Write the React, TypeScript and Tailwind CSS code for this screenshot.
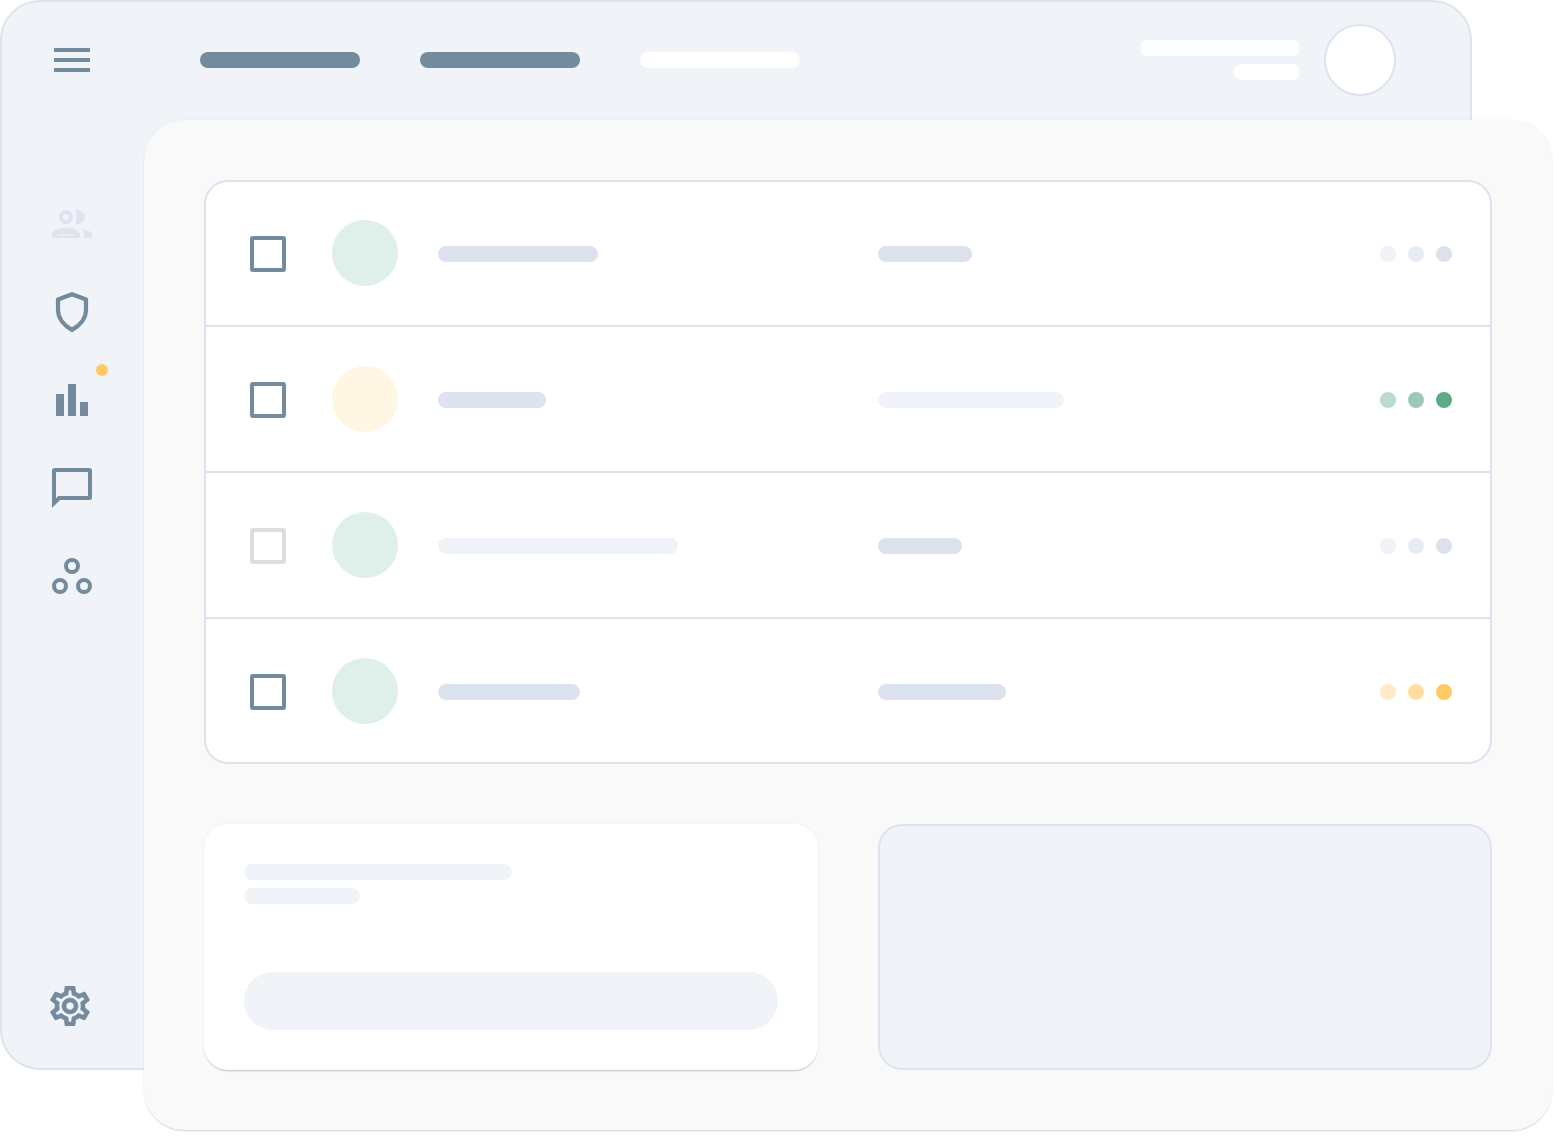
import React from "react";

/* -------------------- Icons -------------------- */

const UsersIcon: React.FC = () => (
  <svg width="40" height="40" viewBox="0 0 40 40" className="text-[#dde3ef]" fill="currentColor">
    <circle cx="14" cy="13" r="5" fill="none" stroke="currentColor" strokeWidth="4" />
    <path d="M23.5 6 C30 6 33 9.5 33 13 C33 16.5 30 20 23.5 20 C25 16 25 10 23.5 6 Z" />
    <path
      fillRule="evenodd"
      d="M14 24 C6 24 0 27 0 31 V34 H28 V31 C28 27 22 24 14 24 Z M4 31.4 C7 29.4 21 29.4 24 31.4 Z"
    />
    <path d="M29.7 25 C36 26 40 28 40 31 V34 H32 V31 C32 29 31.5 27 29.7 25 Z" />
  </svg>
);

const ShieldIcon: React.FC = () => (
  <svg width="40" height="40" viewBox="0 0 40 40" fill="none" stroke="#748a9d" strokeWidth="4.2" strokeLinejoin="round">
    <path d="M20 2.2 L6 7.5 V18 C6 27 13 34 20 37.8 C27 34 34 27 34 18 V7.5 Z" />
  </svg>
);

const BarsIcon: React.FC = () => (
  <svg width="40" height="40" viewBox="0 0 40 40" fill="#748a9d">
    <rect x="4" y="14" width="8" height="22" />
    <rect x="16" y="4" width="8" height="32" />
    <rect x="28" y="22" width="8" height="14" />
  </svg>
);

const ChatIcon: React.FC = () => (
  <svg width="40" height="40" viewBox="0 0 40 40" fill="#748a9d">
    <path
      fillRule="evenodd"
      d="M2.5 0 H37.5 A2.5 2.5 0 0 1 40 2.5 V29.5 A2.5 2.5 0 0 1 37.5 32 H8 L0 40 V2.5 A2.5 2.5 0 0 1 2.5 0 Z M4 4 V30.3 L6.3 28 H36 V4 Z"
    />
  </svg>
);

const NodesIcon: React.FC = () => (
  <svg width="40" height="40" viewBox="0 0 40 40" fill="none" stroke="#748a9d" strokeWidth="4">
    <circle cx="20" cy="10" r="6" />
    <circle cx="8" cy="30" r="6" />
    <circle cx="32" cy="30" r="6" />
  </svg>
);

const GearIcon: React.FC = () => (
  <svg width="40" height="40" viewBox="2 2 20 20" fill="#748a9d" stroke="#748a9d" strokeWidth="0.3">
    <path d="M19.43 12.98c.04-.32.07-.64.07-.98 0-.34-.03-.66-.07-.98l2.11-1.65c.19-.15.24-.42.12-.64l-2-3.46c-.09-.16-.26-.25-.44-.25-.06 0-.12.01-.17.03l-2.49 1c-.52-.4-1.08-.73-1.69-.98l-.38-2.65C14.46 2.18 14.25 2 14 2h-4c-.25 0-.46.18-.49.42l-.38 2.65c-.61.25-1.17.59-1.69.98l-2.49-1c-.06-.02-.12-.03-.18-.03-.17 0-.34.09-.43.25l-2 3.46c-.13.22-.07.49.12.64l2.11 1.65c-.04.32-.07.65-.07.98 0 .33.03.66.07.98l-2.11 1.65c-.19.15-.24.42-.12.64l2 3.46c.09.16.26.25.44.25.06 0 .12-.01.17-.03l2.49-1c.52.4 1.08.73 1.69.98l.38 2.65c.03.24.24.42.49.42h4c.25 0 .46-.18.49-.42l.38-2.65c.61-.25 1.17-.59 1.69-.98l2.49 1c.06.02.12.03.18.03.17 0 .34-.09.43-.25l2-3.46c.12-.22.07-.49-.12-.64l-2.11-1.65zm-1.98-1.71c.04.31.05.52.05.73 0 .21-.02.43-.05.73l-.14 1.13.89.7 1.08.84-.7 1.21-1.27-.51-1.04-.42-.9.68c-.43.32-.84.56-1.25.73l-1.06.43-.16 1.13-.2 1.35h-1.4l-.19-1.35-.16-1.13-1.06-.43c-.43-.18-.83-.41-1.23-.71l-.91-.7-1.06.43-1.27.51-.7-1.21 1.08-.84.89-.7-.14-1.13c-.03-.31-.05-.54-.05-.74s.02-.43.05-.73l.14-1.13-.89-.7-1.08-.84.7-1.21 1.27.51 1.04.42.9-.68c.43-.32.84-.56 1.25-.73l1.06-.43.16-1.13.2-1.35h1.39l.19 1.35.16 1.13 1.06.43c.43.18.83.41 1.23.71l.91.7 1.06-.43 1.27-.51.7 1.21-1.07.85-.89.7.14 1.13zM12 8c-2.21 0-4 1.79-4 4s1.79 4 4 4 4-1.79 4-4-1.79-4-4-4zm0 6c-1.1 0-2-.9-2-2s.9-2 2-2 2 .9 2 2-.9 2-2 2z" />
  </svg>
);

/* -------------------- Table -------------------- */

type RowProps = {
  checkbox: string;
  avatar: string;
  nameWidth: string;
  nameColor: string;
  valueWidth: string;
  valueColor: string;
  dots: [string, string, string];
};

const rows: RowProps[] = [
  {
    checkbox: "border-[#748a9d]",
    avatar: "bg-[#dfefe9]",
    nameWidth: "w-[160px]",
    nameColor: "bg-[#dde3ee]",
    valueWidth: "w-[94px]",
    valueColor: "bg-[#dde2ee]",
    dots: ["bg-[#f0f2f8]", "bg-[#e8ecf4]", "bg-[#dde2ee]"],
  },
  {
    checkbox: "border-[#748a9d]",
    avatar: "bg-[#fff6e3]",
    nameWidth: "w-[108px]",
    nameColor: "bg-[#dde3ee]",
    valueWidth: "w-[186px]",
    valueColor: "bg-[#f0f3f8]",
    dots: ["bg-[#b9dccd]", "bg-[#9cc9b6]", "bg-[#5bab88]"],
  },
  {
    checkbox: "border-[#dedede]",
    avatar: "bg-[#dfefe9]",
    nameWidth: "w-[240px]",
    nameColor: "bg-[#f0f3f8]",
    valueWidth: "w-[84px]",
    valueColor: "bg-[#dde2ee]",
    dots: ["bg-[#f0f2f8]", "bg-[#e8ecf4]", "bg-[#dde2ee]"],
  },
  {
    checkbox: "border-[#748a9d]",
    avatar: "bg-[#dfefe9]",
    nameWidth: "w-[142px]",
    nameColor: "bg-[#dde3ee]",
    valueWidth: "w-[128px]",
    valueColor: "bg-[#dde3ee]",
    dots: ["bg-[#ffebc8]", "bg-[#ffdd9f]", "bg-[#ffc963]"],
  },
];

const Row: React.FC<RowProps> = ({ checkbox, avatar, nameWidth, nameColor, valueWidth, valueColor, dots }) => (
  <div className="box-border flex h-[146px] shrink-0 items-center border-b-2 border-[#dfe2ee] pt-[2px] pl-[44px] pr-[38px]">
    <div className="flex w-[628px] items-center">
      <div className={`box-border h-[36px] w-[36px] rounded-[3px] border-4 bg-white ${checkbox}`} />
      <div className={`mb-[2px] ml-[46px] h-[66px] w-[66px] rounded-full ${avatar}`} />
      <div className={`ml-[40px] h-4 rounded-lg ${nameWidth} ${nameColor}`} />
    </div>
    <div className={`h-4 rounded-lg ${valueWidth} ${valueColor}`} />
    <div className="ml-auto flex gap-3">
      {dots.map((dot, i) => (
        <div key={i} className={`h-4 w-4 rounded-full ${dot}`} />
      ))}
    </div>
  </div>
);

/* -------------------- Main -------------------- */

const App: React.FC = () => {
  return (
    <div className="relative h-[1138px] w-[1558px] overflow-hidden bg-white">
      {/* Back window */}
      <div className="box-border flex h-[1070px] w-[1472px] flex-col rounded-[40px] border-2 border-[#dde3ef] bg-[#f0f3f8]">
        <header className="flex h-[116px] shrink-0 items-center pl-[52px] pr-[74px]">
          <div className="flex w-[36px] flex-col gap-[6px]">
            <div className="h-1 bg-[#748a9d]" />
            <div className="h-1 bg-[#748a9d]" />
            <div className="h-1 bg-[#748a9d]" />
          </div>
          <div className="ml-[110px] flex gap-[60px]">
            <div className="h-4 w-[160px] rounded-lg bg-[#748a9d]" />
            <div className="h-4 w-[160px] rounded-lg bg-[#748a9d]" />
            <div className="h-4 w-[160px] rounded-lg bg-white" />
          </div>
          <div className="ml-auto flex items-center gap-[24px]">
            <div className="flex flex-col items-end gap-2">
              <div className="h-4 w-[160px] rounded-lg bg-white" />
              <div className="h-4 w-[66px] rounded-lg bg-white" />
            </div>
            <div className="box-border h-[72px] w-[72px] rounded-full border-2 border-[#dde3ef] bg-white" />
          </div>
        </header>

        <aside className="flex flex-1 flex-col pb-[42px] pl-[50px] pt-[86px]">
          <div className="flex flex-col gap-[48px]">
            <UsersIcon />
            <ShieldIcon />
            <div className="relative h-[40px] w-[40px]">
              <BarsIcon />
              <div className="absolute left-[44px] top-[-16px] h-3 w-3 rounded-full bg-[#ffc963]" />
            </div>
            <ChatIcon />
            <NodesIcon />
          </div>
          <div className="ml-[-2px] mt-auto">
            <GearIcon />
          </div>
        </aside>
      </div>

      {/* Front panel */}
      <main className="absolute left-[144px] top-[120px] box-border flex h-[1010px] w-[1408px] flex-col rounded-[40px] bg-[#f9f9f9] pl-[60px] pr-[60px] pt-[60px] shadow-[0_2px_2px_-1px_rgba(60,70,90,0.22),0_0_2px_rgba(60,70,90,0.08)]">
        <div className="box-border flex h-[584px] flex-col overflow-hidden rounded-[24px] border-2 border-[#dfe2ee] bg-white">
          <div className="mt-[-1px] flex flex-col">
            {rows.map((row, i) => (
              <Row key={i} {...row} />
            ))}
          </div>
        </div>

        <div className="mt-[60px] flex gap-[60px]">
          <div className="box-border flex h-[246px] w-[614px] flex-col rounded-[24px] bg-white pl-[40px] pt-[40px] shadow-[0_2px_2px_-1px_rgba(60,70,90,0.3),0_0_2px_rgba(60,70,90,0.08)]">
            <div className="h-4 w-[268px] rounded-lg bg-[#f0f3f8]" />
            <div className="mt-2 h-4 w-[116px] rounded-lg bg-[#f0f3f8]" />
            <div className="mt-[68px] h-[58px] w-[534px] rounded-[29px] bg-[#f0f3f8]" />
          </div>
          <div className="box-border h-[246px] flex-1 rounded-[24px] border-2 border-[#dde3ef] bg-[#f0f3f8]" />
        </div>
      </main>
    </div>
  );
};

export default App;
